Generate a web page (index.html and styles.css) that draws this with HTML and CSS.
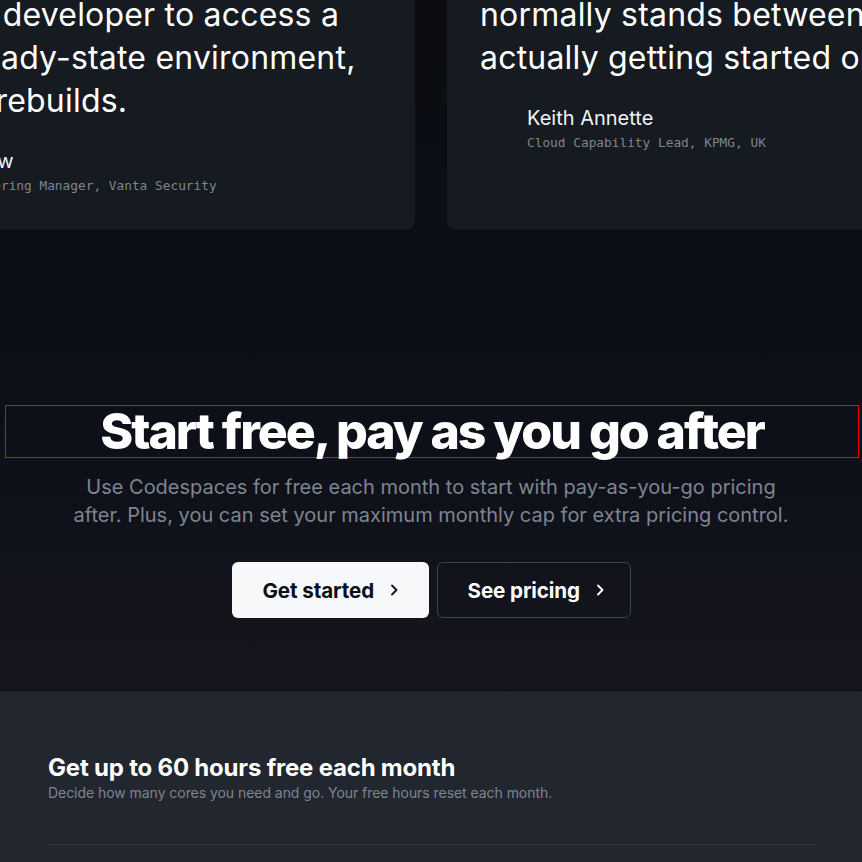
FILE: index.html
```html
<!DOCTYPE html>
<html lang="en">
<head>
<meta charset="utf-8">
<title>Codespaces</title>
<link rel="stylesheet" href="styles.css">
</head>
<body>
<main class="hero">
  <div class="quotes">
    <figure class="card">
      <blockquote class="quote">“Codespaces makes onboarding<br>simple and incredibly fast. It<br>gets a developer to access a<br>true ready-state environment,<br>fewer rebuilds.</blockquote>
      <figcaption class="author">
        <span class="avatar"></span>
        <span class="who">
          <span class="name">Eli Low</span>
          <span class="role">Engineering Manager, Vanta Security</span>
        </span>
      </figcaption>
    </figure>
    <figure class="card">
      <blockquote class="quote">“Codespaces lets developers skip the<br>tedious, error-prone stuff that<br>normally stands between them and<br>actually getting started on real work.”</blockquote>
      <figcaption class="author">
        <span class="avatar"></span>
        <span class="who">
          <span class="name">Keith Annette</span>
          <span class="role">Cloud Capability Lead, KPMG, UK</span>
        </span>
      </figcaption>
    </figure>
  </div>

  <section class="cta">
    <h2 class="cta-title">Start free, pay as you go after</h2>
    <p class="cta-text">Use Codespaces for free each month to start with pay-as-you-go pricing<br>after. Plus, you can set your maximum monthly cap for extra pricing control.</p>
    <div class="actions">
      <a class="btn btn-primary" href="#">Get started <svg class="chev" viewBox="0 0 16 16" width="16" height="16"><path d="M6 3.5 10.5 8 6 12.5" fill="none" stroke="currentColor" stroke-width="1.8" stroke-linecap="round" stroke-linejoin="round"/></svg></a>
      <a class="btn btn-outline" href="#">See pricing <svg class="chev" viewBox="0 0 16 16" width="16" height="16"><path d="M6 3.5 10.5 8 6 12.5" fill="none" stroke="currentColor" stroke-width="1.8" stroke-linecap="round" stroke-linejoin="round"/></svg></a>
    </div>
  </section>
</main>

<section class="pricing">
  <div class="container">
    <h3 class="pricing-title">Get up to 60 hours free each month</h3>
    <p class="pricing-text">Decide how many cores you need and go. Your free hours reset each month.</p>
    <hr class="divider">
  </div>
</section>
</body>
</html>
```

FILE: styles.css
```css
* { box-sizing: border-box; }

html, body {
  margin: 0;
  padding: 0;
  background: #22262e;
  overflow: hidden;
}

body {
  font-family: Inter, "Noto Sans", sans-serif;
  color: #ffffff;
  width: 862px;
  height: 862px;
}

.hero {
  background: linear-gradient(180deg, #0a0c11 0%, #0c0f16 35%, #0e1019 65%, #15161e 100%);
  padding-bottom: 72px;
  overflow: hidden;
}

.quotes {
  display: flex;
  justify-content: center;
  gap: 32px;
  margin-top: -126px;
}

.card {
  flex: 0 0 548px;
  min-width: 0;
  margin: 0;
  background: #161a21;
  border-radius: 8px;
  padding: 33px 33px 34px;
  box-shadow: 0 1px 0 #06080b;
  overflow: hidden;
}

.quote {
  margin: 0;
  font-size: 32px;
  line-height: 43px;
  font-weight: 400;
  letter-spacing: 0.2px;
  white-space: nowrap;
  color: #ffffff;
}

.author {
  display: flex;
  align-items: flex-start;
  margin-top: 25px;
}

.avatar {
  width: 32px;
  height: 32px;
  margin-right: 15px;
  flex: none;
}

.who {
  display: flex;
  flex-direction: column;
}

.name {
  font-size: 20px;
  line-height: 28px;
  color: #f0f3f6;
}

.role {
  font-family: "DejaVu Sans Mono", "Liberation Mono", monospace;
  font-size: 12.8px;
  line-height: 20px;
  color: #7d8590;
  margin-top: 1px;
}

.cta {
  margin-top: 175px;
  text-align: center;
}

.cta-title {
  margin: 0 3px 0 5px;
  border: 1px solid #ff0000;
  font-size: 50px;
  line-height: 51px;
  font-weight: 800;
  letter-spacing: -2.05px;
  color: #ffffff;
}

.cta-text {
  margin: 15px 0 0;
  font-size: 20px;
  line-height: 28px;
  font-weight: 400;
  color: #7d8590;
}

.actions {
  display: flex;
  justify-content: center;
  gap: 8px;
  margin-top: 33px;
}

.btn {
  display: inline-flex;
  align-items: center;
  gap: 12px;
  height: 56px;
  border-radius: 6px;
  font-size: 20.6px;
  font-weight: 700;
  text-decoration: none;
  letter-spacing: -0.1px;
}

.btn-primary {
  width: 197px;
  padding-left: 31px;
  background: #f6f8fa;
  color: #0d1117;
}

.btn-outline {
  width: 194px;
  padding-left: 30px;
  border: 1px solid #3d434b;
  color: #ffffff;
}

.chev { flex: none; }

.pricing {
  border-top: 1px solid #0b0d11;
  background: #22262e;
  padding-top: 62px;
}

.container {
  width: 768px;
  margin: 0 auto;
  padding-left: 1px;
}

.pricing-title {
  margin: 0;
  font-size: 24px;
  line-height: 30px;
  font-weight: 700;
  letter-spacing: -0.2px;
  color: #ffffff;
}

.pricing-text {
  margin: 0;
  font-size: 14px;
  line-height: 20px;
  color: #7d8590;
  letter-spacing: -0.05px;
}

.divider {
  margin: 41px 0 0;
  border: 0;
  border-top: 1px solid #31363f;
}
```
